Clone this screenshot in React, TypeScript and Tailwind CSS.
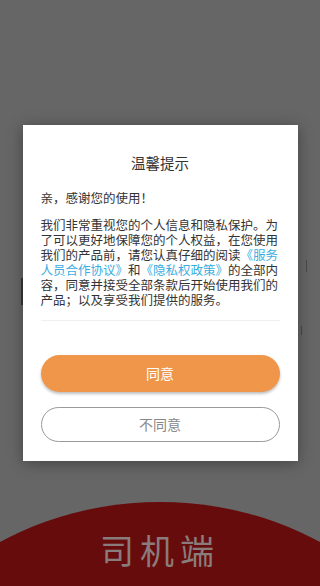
import React from "react";

export default function App() {
  const font = { fontFamily: '"Noto Sans CJK SC", "Noto Sans", sans-serif' };
  return (
    <div className="relative w-[320px] h-[586px] overflow-hidden bg-[#666666]" style={font}>
      {/* background page (dimmed) */}
      <div className="absolute left-[21px] top-[278px] w-[2px] h-[27px] bg-[#3a3636]" />
      <div className="absolute left-[306px] top-[260px] w-[1px] h-[12px] bg-[#4a4a4a]" />
      <div className="absolute left-[301px] top-[326px] w-[1px] h-[9px] bg-[#4a4a4a]" />
      <div className="absolute left-[-140px] top-[502px] w-[600px] h-[520px] rounded-[50%] bg-[#670c0c]" />
      <div className="absolute left-0 right-0 top-[528px] text-center text-[34px] leading-[44px] tracking-[6px] text-[#8a7c7c]">
        司机端
      </div>

      {/* dialog */}
      <div className="absolute inset-0 flex items-center justify-center">
        <div className="w-[275px] h-[336px] bg-white shadow-[0_2px_14px_rgba(0,0,0,0.35)] px-[18px] pt-[28px] flex flex-col">
          <div className="text-center text-[14.5px] leading-[20px] text-[#333333]">温馨提示</div>
          <div className="mt-[17px] text-[12.5px] leading-[15px] text-[#333333]">亲，感谢您的使用！</div>
          <div className="mt-[12px] text-[12.5px] leading-[15px] text-[#333333] w-[240px]">
            我们非常重视您的个人信息和隐私保护。为了可以更好地保障您的个人权益，在您使用我们的产品前，请您认真仔细的阅读
            <span className="text-[#3aaee0]">《服务人员合作协议》</span>和
            <span className="text-[#3aaee0]">《隐私权政策》</span>
            的全部内容，同意并接受全部条款后开始使用我们的产品；以及享受我们提供的服务。
          </div>
          <div className="mt-[13px] h-[1px] bg-[#f0f0f0]" />
          <button className="mt-[34px] h-[37px] w-full rounded-full bg-[#f0964a] text-white text-[14px] shadow-[0_2px_3px_rgba(0,0,0,0.25)]">
            同意
          </button>
          <button className="mt-[15px] h-[35px] w-full rounded-full border border-[#9a9a9a] bg-white text-[#888888] text-[14px]">
            不同意
          </button>
        </div>
      </div>
    </div>
  );
}
